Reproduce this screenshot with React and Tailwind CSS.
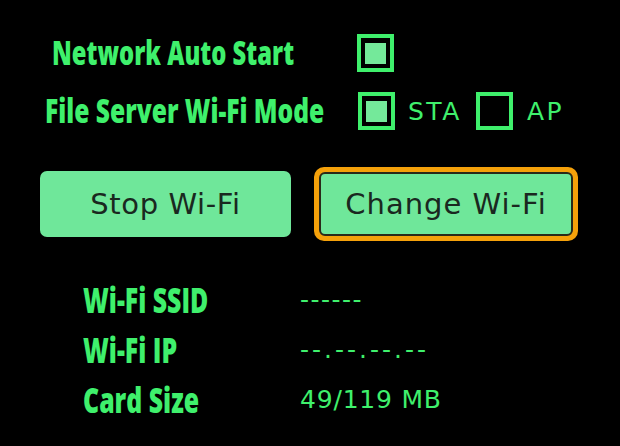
export default function App() {
  const label = "inline-block origin-left whitespace-nowrap font-['Open_Sans',sans-serif] font-extrabold text-[#3ff06c] leading-none";
  const val = "font-['DejaVu_Sans',sans-serif] text-[#3ff06c] text-[25px] leading-none whitespace-nowrap";
  const box = "w-[37px] h-[38px] border-[4px] border-[#3ff06c] flex items-center justify-center shrink-0";
  const btnText = "font-['DejaVu_Sans',sans-serif] text-[29px] text-[#1a2820] leading-none";
  return (
    <div className="w-[620px] h-[446px] bg-black overflow-hidden relative">
      <div className="flex flex-col pt-[34px]">
        <div className="flex items-center h-[38px]">
          <div className="w-[357px] pl-[52px]">
            <span className={label + " text-[33px] scale-x-[0.72]"}>Network Auto Start</span>
          </div>
          <div className={box}><div className="w-[21px] h-[21px] bg-[#74e99a]" /></div>
        </div>
        <div className="flex items-center h-[38px] mt-[20px]">
          <div className="w-[358px] pl-[45px]">
            <span className={label + " text-[33px] scale-x-[0.745]"}>File Server Wi-Fi Mode</span>
          </div>
          <div className={box}><div className="w-[21px] h-[21px] bg-[#74e99a]" /></div>
          <div className={val + " ml-[13px] w-[68px] tracking-[2.5px]"}>STA</div>
          <div className={box}></div>
          <div className={val + " ml-[14px] tracking-[2.5px]"}>AP</div>
        </div>
      </div>
      <div className="flex items-center mt-[37px] pl-[40px]">
        <div className="w-[251px] h-[66px] rounded-[7px] bg-[#6fe79a] flex items-center justify-center">
          <span className={btnText + " tracking-[0.6px]"}>Stop Wi-Fi</span>
        </div>
        <div className="ml-[23px] w-[264px] h-[74px] rounded-[10px] bg-[#f5a10a] p-[5px]">
          <div className="w-full h-full rounded-[6px] border-[2px] border-[#2a2a1a] bg-[#6fe79a] flex items-center justify-center">
            <span className={btnText + " tracking-[1px]"}>Change Wi-Fi</span>
          </div>
        </div>
      </div>
      <div className="grid grid-cols-[217px_1fr] gap-y-[15px] mt-[41px] pl-[83px] items-center">
        <span className={label + " text-[35px] scale-x-[0.71]"}>Wi-Fi SSID</span>
        <div className={val + " tracking-[1.5px]"}>------</div>
        <span className={label + " text-[35px] scale-x-[0.71]"}>Wi-Fi IP</span>
        <div className={val + " tracking-[3px]"}>--.--.--.--</div>
        <span className={label + " text-[35px] scale-x-[0.71]"}>Card Size</span>
        <div className={val + " tracking-[0.8px]"}>49/119 MB</div>
      </div>
    </div>
  );
}
